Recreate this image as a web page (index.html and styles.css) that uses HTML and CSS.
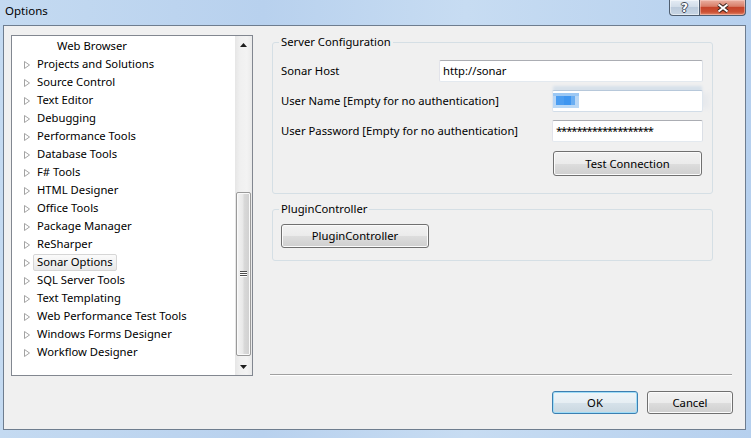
FILE: index.html
```html
<!DOCTYPE html>
<html>
<head>
<meta charset="utf-8">
<title>Options</title>
<link rel="stylesheet" href="styles.css">
</head>
<body>
<div class="window">
  <div class="titlebar">
    <span class="title">Options</span>
    <div class="caption">
      <div class="cap help"><span>?</span></div>
      <div class="cap close">
        <svg width="14" height="10" viewBox="0 0 14 10"><path d="M2.5 1.5 L11.5 8.5 M11.5 1.5 L2.5 8.5" stroke="#3b2520" stroke-width="4" fill="none"/><path d="M2.5 1.5 L11.5 8.5 M11.5 1.5 L2.5 8.5" stroke="#fff" stroke-width="2" fill="none"/></svg>
      </div>
    </div>
  </div>
  <div class="client">
    <div class="main">
      <div class="tree">
        <ul class="items">
          <li class="child"><svg class="exp" width="7" height="8" viewBox="0 0 7 8"><path d="M0.5 0.5 L5.5 4 L0.5 7.5 Z" fill="#fff" stroke="#a3a3a3"/></svg><span class="lbl">Web Browser</span></li>
          <li><svg class="exp" width="7" height="8" viewBox="0 0 7 8"><path d="M0.5 0.5 L5.5 4 L0.5 7.5 Z" fill="#fff" stroke="#a3a3a3"/></svg><span class="lbl">Projects and Solutions</span></li>
          <li><svg class="exp" width="7" height="8" viewBox="0 0 7 8"><path d="M0.5 0.5 L5.5 4 L0.5 7.5 Z" fill="#fff" stroke="#a3a3a3"/></svg><span class="lbl">Source Control</span></li>
          <li><svg class="exp" width="7" height="8" viewBox="0 0 7 8"><path d="M0.5 0.5 L5.5 4 L0.5 7.5 Z" fill="#fff" stroke="#a3a3a3"/></svg><span class="lbl">Text Editor</span></li>
          <li><svg class="exp" width="7" height="8" viewBox="0 0 7 8"><path d="M0.5 0.5 L5.5 4 L0.5 7.5 Z" fill="#fff" stroke="#a3a3a3"/></svg><span class="lbl">Debugging</span></li>
          <li><svg class="exp" width="7" height="8" viewBox="0 0 7 8"><path d="M0.5 0.5 L5.5 4 L0.5 7.5 Z" fill="#fff" stroke="#a3a3a3"/></svg><span class="lbl">Performance Tools</span></li>
          <li><svg class="exp" width="7" height="8" viewBox="0 0 7 8"><path d="M0.5 0.5 L5.5 4 L0.5 7.5 Z" fill="#fff" stroke="#a3a3a3"/></svg><span class="lbl">Database Tools</span></li>
          <li><svg class="exp" width="7" height="8" viewBox="0 0 7 8"><path d="M0.5 0.5 L5.5 4 L0.5 7.5 Z" fill="#fff" stroke="#a3a3a3"/></svg><span class="lbl">F# Tools</span></li>
          <li><svg class="exp" width="7" height="8" viewBox="0 0 7 8"><path d="M0.5 0.5 L5.5 4 L0.5 7.5 Z" fill="#fff" stroke="#a3a3a3"/></svg><span class="lbl">HTML Designer</span></li>
          <li><svg class="exp" width="7" height="8" viewBox="0 0 7 8"><path d="M0.5 0.5 L5.5 4 L0.5 7.5 Z" fill="#fff" stroke="#a3a3a3"/></svg><span class="lbl">Office Tools</span></li>
          <li><svg class="exp" width="7" height="8" viewBox="0 0 7 8"><path d="M0.5 0.5 L5.5 4 L0.5 7.5 Z" fill="#fff" stroke="#a3a3a3"/></svg><span class="lbl">Package Manager</span></li>
          <li><svg class="exp" width="7" height="8" viewBox="0 0 7 8"><path d="M0.5 0.5 L5.5 4 L0.5 7.5 Z" fill="#fff" stroke="#a3a3a3"/></svg><span class="lbl">ReSharper</span></li>
          <li class="sel"><svg class="exp" width="7" height="8" viewBox="0 0 7 8"><path d="M0.5 0.5 L5.5 4 L0.5 7.5 Z" fill="#fff" stroke="#a3a3a3"/></svg><span class="lbl">Sonar Options</span></li>
          <li><svg class="exp" width="7" height="8" viewBox="0 0 7 8"><path d="M0.5 0.5 L5.5 4 L0.5 7.5 Z" fill="#fff" stroke="#a3a3a3"/></svg><span class="lbl">SQL Server Tools</span></li>
          <li><svg class="exp" width="7" height="8" viewBox="0 0 7 8"><path d="M0.5 0.5 L5.5 4 L0.5 7.5 Z" fill="#fff" stroke="#a3a3a3"/></svg><span class="lbl">Text Templating</span></li>
          <li><svg class="exp" width="7" height="8" viewBox="0 0 7 8"><path d="M0.5 0.5 L5.5 4 L0.5 7.5 Z" fill="#fff" stroke="#a3a3a3"/></svg><span class="lbl">Web Performance Test Tools</span></li>
          <li><svg class="exp" width="7" height="8" viewBox="0 0 7 8"><path d="M0.5 0.5 L5.5 4 L0.5 7.5 Z" fill="#fff" stroke="#a3a3a3"/></svg><span class="lbl">Windows Forms Designer</span></li>
          <li><svg class="exp" width="7" height="8" viewBox="0 0 7 8"><path d="M0.5 0.5 L5.5 4 L0.5 7.5 Z" fill="#fff" stroke="#a3a3a3"/></svg><span class="lbl">Workflow Designer</span></li>
        </ul>
        <div class="vscroll">
          <div class="sbtn"><svg width="7" height="4" viewBox="0 0 7 4"><path d="M3.5 0 L7 4 L0 4 Z" fill="#1e1e1e"/></svg></div>
          <div class="track"><div class="thumb"><div class="grip"></div></div></div>
          <div class="sbtn"><svg width="7" height="4" viewBox="0 0 7 4"><path d="M0 0 L7 0 L3.5 4 Z" fill="#1e1e1e"/></svg></div>
        </div>
      </div>
      <div class="panel">
        <fieldset class="group server">
          <legend>Server Configuration</legend>
          <div class="row">
            <span class="label">Sonar Host</span>
            <div class="tb host">http://sonar</div>
          </div>
          <div class="row">
            <span class="label">User Name [Empty for no authentication]</span>
            <div class="tb short blur"><span class="blob"></span></div>
          </div>
          <div class="row">
            <span class="label">User Password [Empty for no authentication]</span>
            <div class="tb short pw">*******************</div>
          </div>
          <button class="btn test">Test Connection</button>
        </fieldset>
        <fieldset class="group plugin">
          <legend>PluginController</legend>
          <button class="btn pluginbtn">PluginController</button>
        </fieldset>
        <hr class="sep">
      </div>
    </div>
    <div class="footer">
      <button class="btn dlg ok">OK</button>
      <button class="btn dlg">Cancel</button>
    </div>
  </div>
</div>
</body>
</html>
```
FILE: styles.css
```css
* { box-sizing: border-box; }
html, body { margin: 0; padding: 0; }
body {
  width: 751px;
  height: 438px;
  overflow: hidden;
  font-family: "Noto Sans", "Open Sans", sans-serif;
  font-size: 11.25px;
  color: #000;
  background: #b9d2ee;
}
.window {
  width: 751px;
  height: 438px;
  display: flex;
  flex-direction: column;
  background: linear-gradient(to right, #c4daf1 0%, #b8d1ee 35%, #c7dcf2 62%, #b6d0ee 100%);
}
.titlebar {
  flex: none;
  height: 25px;
  display: flex;
  align-items: flex-start;
}
.title {
  padding: 3px 0 0 5px;
  line-height: 16px;
  font-size: 11.5px;
  color: #000;
}
.caption {
  margin-left: auto;
  margin-right: 5px;
  display: flex;
}
.cap {
  height: 16px;
  display: flex;
  align-items: center;
  justify-content: center;
  border: 1px solid #4f5e70;
  border-top: none;
}
.help {
  width: 30px;
  border-right: none;
  border-radius: 0 0 0 4px;
  background: linear-gradient(#e4ecf5 0%, #d2dde9 45%, #bccbdc 50%, #c7d5e4 100%);
  box-shadow: inset 0 0 0 1px rgba(255,255,255,0.5);
}
.help span {
  font-family: "DejaVu Sans", sans-serif;
  font-weight: bold;
  font-size: 12px;
  line-height: 12px;
  color: #fff;
  text-shadow: 1px 0 0 #3d4a58, -1px 0 0 #3d4a58, 0 1px 0 #3d4a58, 0 -1px 0 #3d4a58;
}
.close {
  width: 47px;
  border-radius: 0 0 4px 0;
  background: linear-gradient(#eab0a2 0%, #d97f6a 42%, #c5442b 50%, #cc5134 80%, #e28a6e 100%);
  box-shadow: inset 0 0 0 1px rgba(255,220,210,0.45);
}
.client {
  flex: none;
  margin: 0 5px 0 3px;
  height: 405px;
  border: 1px solid #6e7d8f;
  background: #f0f0f0;
  padding: 9px 12px 0 7px;
  display: flex;
  flex-direction: column;
}
.main {
  flex: none;
  height: 341px;
  display: flex;
}
.tree {
  flex: none;
  width: 242px;
  border: 1px solid #828790;
  background: #fff;
  display: flex;
}
.items {
  flex: 1;
  margin: 0;
  padding: 1px 0 0 0;
  list-style: none;
  overflow: hidden;
  min-width: 0;
}
.items li {
  height: 18px;
  display: flex;
  align-items: center;
  padding-left: 12px;
  white-space: nowrap;
}
.items li.child { padding-left: 32px; }
.items li.child .exp { visibility: hidden; }
.exp {
  flex: none;
  margin-top: 1px;
  margin-right: 2px;
}
.lbl {
  height: 17px;
  line-height: 13px;
  padding: 0 3px;
  border: 1px solid transparent;
  border-radius: 2px;
}
.items li.sel .lbl {
  border-color: #d6d6d6;
  background: linear-gradient(#fbfbfb, #e8e8e8);
}
.vscroll {
  flex: none;
  width: 17px;
  display: flex;
  flex-direction: column;
  background: linear-gradient(to right, #e6e6e6 0%, #f0f0f0 30%, #f3f3f3 70%, #eaeaea 100%);
}
.sbtn {
  flex: none;
  height: 17px;
  display: flex;
  align-items: center;
  justify-content: center;
}
.track {
  flex: 1;
  display: flex;
  flex-direction: column;
  padding: 0 1px;
}
.thumb {
  margin-top: auto;
  margin-bottom: 2px;
  height: 164px;
  border: 1px solid #9a9a9a;
  border-radius: 2px;
  background: linear-gradient(to right, #f4f4f4 0%, #e8e8e8 45%, #d9d9d9 55%, #cfcfcf 100%);
  box-shadow: inset 0 0 0 1px #fafafa;
  display: flex;
  align-items: center;
  justify-content: center;
}
.grip {
  width: 7px;
  height: 6px;
  background: repeating-linear-gradient(#4d4d4d 0 1px, #ffffff 1px 2px);
}
.panel {
  flex: 1;
  min-width: 0;
  margin-left: 18px;
  display: flex;
  flex-direction: column;
}
.group {
  margin: 0 20px 0 1px;
  padding: 11px 9px 17px 8px;
  border: 1px solid #d5dfe5;
  border-radius: 3px;
  min-width: 0;
  display: flex;
  flex-direction: column;
}
.group legend {
  padding: 0 2px 1px 2px;
  margin-left: -2px;
  line-height: 13px;
  height: 14px;
}
.plugin {
  margin-top: 8px;
  padding: 8px 9px 12px 8px;
}
.row {
  height: 22px;
  display: flex;
  align-items: center;
  justify-content: space-between;
}
.row + .row { margin-top: 8px; }
.label { padding-bottom: 1px; }
.tb {
  height: 22px;
  border: 1px solid;
  border-color: #abadb3 #dbdfe6 #e3e9ef #e2e3ea;
  border-radius: 2px;
  background: #fff;
  padding-left: 3px;
  line-height: 19px;
  white-space: nowrap;
}
.host { width: 264px; }
.short { width: 151px; }
.blur {
  padding-left: 0;
  border-color: #b7c8da #dfe6ee #d2dde8 #dfe6ee;
  box-shadow: 0 -5px 3px -1px #d6e0ea, 10px 0 5px -3px #e8eaed;
}
.blob {
  display: block;
  width: 26px;
  height: 15px;
  margin-top: 2px;
  background:
    linear-gradient(#9cc8f4 0 3px, transparent 3px 12px, #b9d8f6 12px 15px),
    linear-gradient(to right, #b8d6f6 0 3px, #4b9df1 3px 11px, #3f96f0 11px 18px, #6aaef2 18px 22px, #b9d7f5 22px 26px);
}
.pw { padding-left: 3px; letter-spacing: -1.1px; }
.btn {
  font-family: inherit;
  font-size: 11.25px;
  color: #000;
  padding: 0 0 1px 0;
  border: 1px solid #707070;
  border-radius: 3px;
  background: linear-gradient(#f2f2f2 0%, #ebebeb 50%, #dddddd 51%, #cfcfcf 100%);
  box-shadow: inset 0 0 0 1px #fbfbfb;
}
.test {
  align-self: flex-end;
  margin-top: 9px;
  margin-right: 1px;
  width: 149px;
  height: 25px;
}
.pluginbtn {
  align-self: flex-start;
  width: 148px;
  height: 24px;
}
.sep {
  margin: auto 1px 0 -1px;
  height: 2px;
  border: 0;
  border-top: 1px solid #a0a0a0;
  border-bottom: 1px solid #ffffff;
}
.footer {
  flex: none;
  margin-top: 15px;
  display: flex;
  justify-content: flex-end;
  gap: 9px;
}
.dlg {
  width: 86px;
  height: 23px;
}
.ok {
  border-color: #3c7fb1;
  box-shadow: inset 0 0 0 1px #9fdcf7;
  background: linear-gradient(#eef5f9 0%, #e6eef3 50%, #d6e2ea 51%, #c9d7e0 100%);
}
```
